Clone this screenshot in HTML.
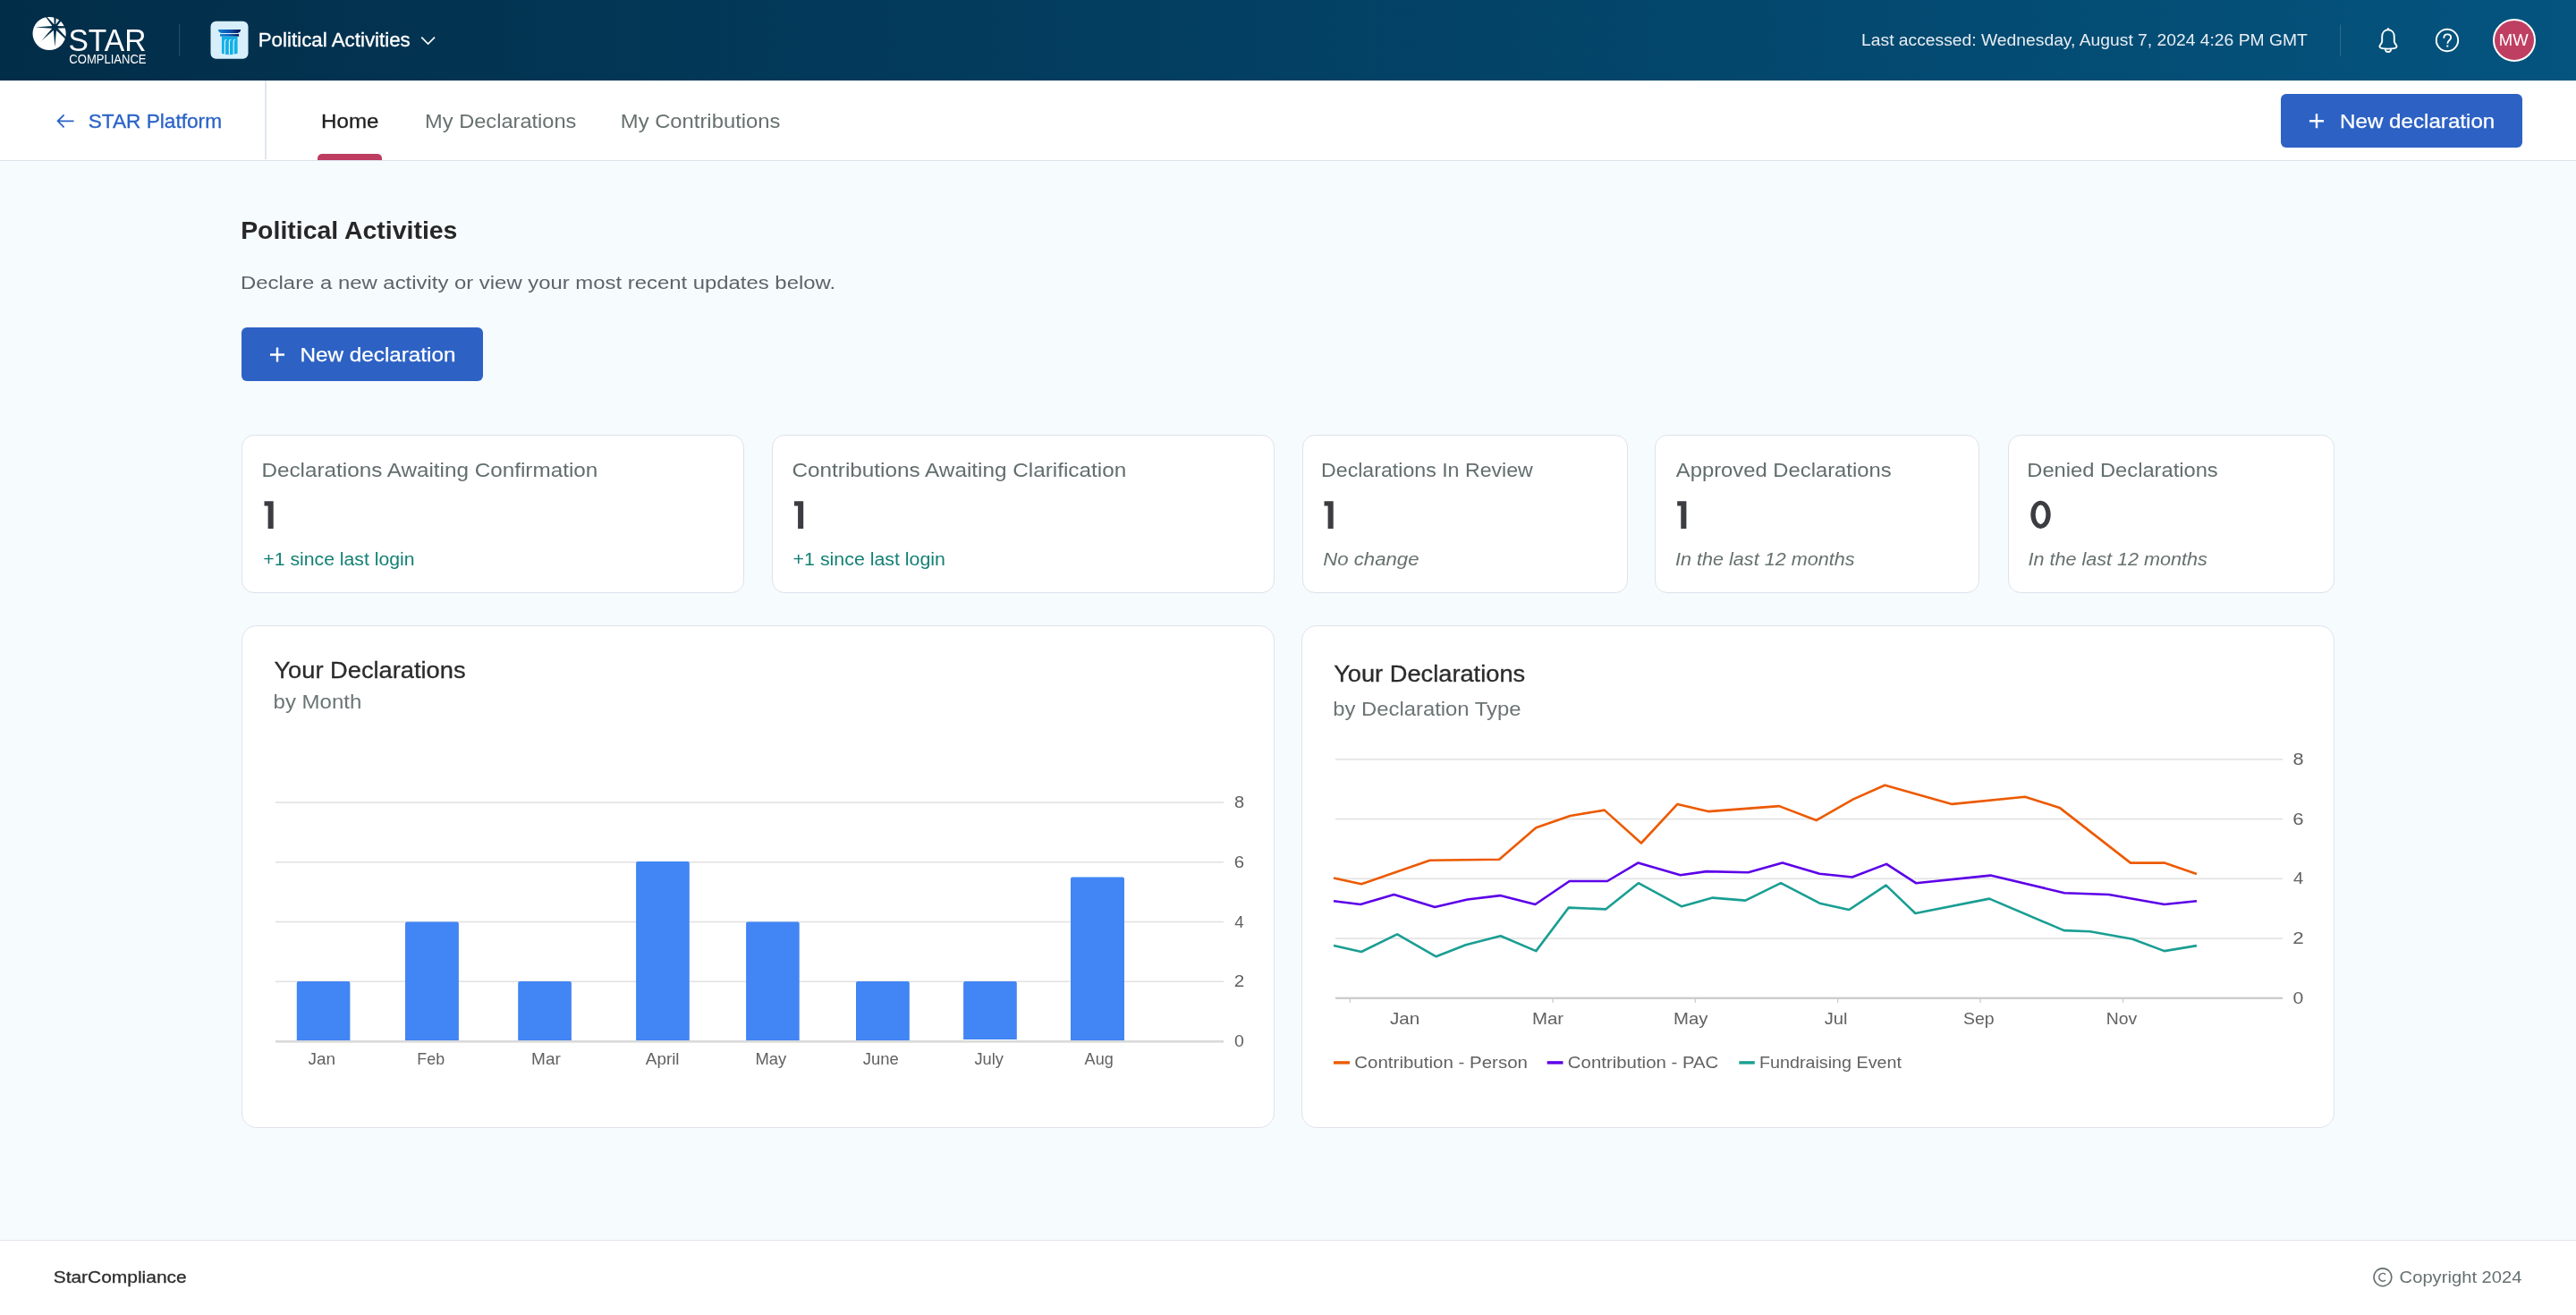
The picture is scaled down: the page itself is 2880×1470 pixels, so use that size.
<!DOCTYPE html>
<html><head><meta charset="utf-8"><title>Political Activities</title>
<style>
html,body{margin:0;padding:0;width:2880px;height:1470px;overflow:hidden;background:#f6fbfe;font-family:"Liberation Sans",sans-serif;}
.abs{position:absolute;box-sizing:border-box;}
#hdr{left:0;top:0;width:2880px;height:90px;background:linear-gradient(90deg,#022d48 0%,#033d5f 42%,#04547f 100%);}
#sub{left:0;top:90px;width:2880px;height:90px;background:#fff;border-bottom:1.5px solid #dde3ec;}
#vdiv{left:296px;top:90px;width:1.5px;height:88px;background:#e1e6ee;}
#uline{left:355.3px;top:172.4px;width:72.2px;height:6.6px;background:#bd3c60;border-radius:5px 5px 0 0;}
.btn{background:#2d62c4;border-radius:6px;}
.card{background:#fff;border:1.8px solid #dfe2ec;border-radius:14px;}
.ccard{background:#fff;border:1.8px solid #dfe2ec;border-radius:17px;}
#foot{left:0;top:1386px;width:2880px;height:84px;background:#fff;border-top:1.5px solid #e2e7ee;}
svg{position:absolute;left:0;top:0;will-change:transform;}
</style></head><body>
<div class="abs" id="hdr"></div>
<div class="abs" id="sub"></div>
<div class="abs" id="vdiv"></div>
<div class="abs" id="uline"></div>
<div class="abs btn" style="left:2550px;top:105px;width:270px;height:60px"></div>
<div class="abs btn" style="left:270px;top:366px;width:270px;height:60px"></div>
<div class="abs card" style="left:270px;top:486px;width:562px;height:176.5px"></div>
<div class="abs card" style="left:863px;top:486px;width:562px;height:176.5px"></div>
<div class="abs card" style="left:1456px;top:486px;width:364px;height:176.5px"></div>
<div class="abs card" style="left:1850px;top:486px;width:363px;height:176.5px"></div>
<div class="abs card" style="left:2245px;top:486px;width:365px;height:176.5px"></div>
<div class="abs ccard" style="left:270px;top:699px;width:1155px;height:562px"></div>
<div class="abs ccard" style="left:1455px;top:699px;width:1155px;height:562px"></div>
<div class="abs" id="foot"></div>
<svg width="2880" height="1470" viewBox="0 0 2880 1470" font-family="Liberation Sans, sans-serif">
<path d="M295.5 560.3 H305.7 V590.9 H299.6 V565.6 H295.5 Z" fill="#3c3d42"/>
<path d="M888.0 560.3 H898.2 V590.9 H892.1 V565.6 H888.0 Z" fill="#3c3d42"/>
<path d="M1480.5 560.3 H1490.7 V590.9 H1484.6 V565.6 H1480.5 Z" fill="#3c3d42"/>
<path d="M1875.2 560.3 H1885.4 V590.9 H1879.3 V565.6 H1875.2 Z" fill="#3c3d42"/>
<path d="M2281.5 559.7 A11.2 15.6 0 1 0 2281.5 590.9 A11.2 15.6 0 1 0 2281.5 559.7 Z M2281.5 564.6 A5.8 10.65 0 1 1 2281.5 585.9 A5.8 10.65 0 1 1 2281.5 564.6 Z" fill="#3c3d42" fill-rule="evenodd"/>
<rect x="200" y="27" width="1.2" height="36" fill="#ffffff" fill-opacity="0.14"/>
<rect x="2616" y="27.5" width="1.2" height="35.5" fill="#ffffff" fill-opacity="0.14"/>
<circle cx="55.1" cy="37.5" r="18.6" fill="#fff"/><polygon points="61.4,28.7 39.3,30.6 39.3,30.6 61.4,32.1" fill="#022e4a"/><polygon points="62.6,29.4 50.9,17.2 50.3,17.8 60.2,31.4" fill="#022e4a"/><polygon points="62.1,30.4 63.0,15.5 60.2,15.5 60.7,30.4" fill="#022e4a"/><polygon points="62.2,31.0 69.6,22.0 67.6,20.4 60.6,29.8" fill="#022e4a"/><polygon points="61.4,31.7 76.0,31.3 76.0,29.3 61.4,29.1" fill="#022e4a"/><polygon points="60.3,31.5 73.9,44.2 75.1,43.0 62.5,29.3" fill="#022e4a"/><polygon points="59.5,30.4 61.4,52.6 61.4,52.6 63.3,30.4" fill="#022e4a"/><polygon points="60.3,29.3 46.5,45.4 46.5,45.4 62.5,31.5" fill="#022e4a"/><circle cx="61.4" cy="30.4" r="3.4" fill="#022e4a"/>
<defs><linearGradient id="cap" x1="0" x2="1" y1="0" y2="0"><stop offset="0" stop-color="#0e82d8"/><stop offset="0.55" stop-color="#0a4fa8"/><stop offset="1" stop-color="#050f50"/></linearGradient>
<linearGradient id="hdr" x1="0" x2="1" y1="0" y2="0"><stop offset="0" stop-color="#022c47"/><stop offset="0.45" stop-color="#033c60"/><stop offset="1" stop-color="#04517f"/></linearGradient></defs>
<rect x="235.5" y="23.8" width="42" height="42" rx="6" fill="#d7effb"/>
<path d="M243.9 33.1 H269.2 Q268.8 36.7 265.5 36.9 H247.6 Q244.3 36.7 243.9 33.1 Z" fill="url(#cap)"/>
<rect x="246" y="38.1" width="21.1" height="2.6" fill="url(#cap)"/>
<path d="M247.9 40.7 H265.6 V59.8 Q256.7 62.6 247.9 59.8 Z" fill="#12b0e8"/>
<path d="M251.4 61 V46.2 Q251.4 44.3 253.2 44.3" stroke="#d7effb" stroke-width="1.2" fill="none"/>
<path d="M256.4 61 V46.2 Q256.4 44.3 258.2 44.3" stroke="#d7effb" stroke-width="1.2" fill="none"/>
<path d="M261.2 61 V46.2 Q261.2 44.3 263.0 44.3" stroke="#d7effb" stroke-width="1.2" fill="none"/>
<polyline points="471.2,41.6 478.6,49 486,41.6" fill="none" stroke="#fff" stroke-width="1.7"/>
<path d="M2670 33.3 C2665.8 33.3 2663.2 36.7 2663.2 41 V46.3 C2663.2 48.6 2660.4 50 2660.4 52 C2660.4 53.6 2664.5 54.6 2670 54.6 C2675.5 54.6 2679.6 53.6 2679.6 52 C2679.6 50 2676.8 48.6 2676.8 46.3 V41 C2676.8 36.7 2674.2 33.3 2670 33.3 Z" fill="none" stroke="#fff" stroke-width="1.9"/>
<rect x="2668.7" y="31.3" width="2.6" height="2.6" rx="1.1" fill="#fff"/>
<path d="M2666.9 54.9 A3.1 3.1 0 0 0 2673.1 54.9" fill="none" stroke="#fff" stroke-width="1.8"/>
<circle cx="2736" cy="45" r="12.2" fill="none" stroke="#fff" stroke-width="1.9"/>
<path d="M2732.3 42.8 C2732.3 39.8 2734 38.4 2736.2 38.4 C2738.6 38.4 2740.2 40 2740.2 42 C2740.2 44.8 2736.3 45.4 2736.3 48.8" fill="none" stroke="#fff" stroke-width="1.9"/>
<rect x="2735.3" y="50.5" width="2" height="2" fill="#fff"/>
<circle cx="2811" cy="45" r="23" fill="#bf3f62" stroke="#fff" stroke-width="2"/>
<path d="M82.6 135.3 H64.8 M71.6 128.3 L64.6 135.3 L71.6 142.3" fill="none" stroke="#2b63c6" stroke-width="1.8"/>
<path d="M2582.0 135.3 h16 M2590.0 127.3 v16" stroke="#fff" stroke-width="2.4"/>
<path d="M302.0 396.5 h16 M310.0 388.5 v16" stroke="#fff" stroke-width="2.4"/>
<rect x="308" y="896.20" width="1060" height="1.6" fill="#e2e2e2"/>
<rect x="308" y="962.95" width="1060" height="1.6" fill="#e2e2e2"/>
<rect x="308" y="1029.70" width="1060" height="1.6" fill="#e2e2e2"/>
<rect x="308" y="1096.45" width="1060" height="1.6" fill="#e2e2e2"/>
<path d="M331.8 1164.0 V1099.0 Q331.8 1097.0 333.8 1097.0 H389.4 Q391.4 1097.0 391.4 1099.0 V1164.0 Z" fill="#4285f4"/>
<path d="M453.0 1164.0 V1032.5 Q453.0 1030.5 455.0 1030.5 H510.9 Q512.9 1030.5 512.9 1032.5 V1164.0 Z" fill="#4285f4"/>
<path d="M579.2 1164.0 V1099.0 Q579.2 1097.0 581.2 1097.0 H636.9 Q638.9 1097.0 638.9 1099.0 V1164.0 Z" fill="#4285f4"/>
<path d="M711.1 1164.0 V965.0 Q711.1 963.0 713.1 963.0 H768.8 Q770.8 963.0 770.8 965.0 V1164.0 Z" fill="#4285f4"/>
<path d="M834.1 1164.0 V1032.5 Q834.1 1030.5 836.1 1030.5 H891.7 Q893.7 1030.5 893.7 1032.5 V1164.0 Z" fill="#4285f4"/>
<path d="M957.0 1164.0 V1099.0 Q957.0 1097.0 959.0 1097.0 H1014.8 Q1016.8 1097.0 1016.8 1099.0 V1164.0 Z" fill="#4285f4"/>
<path d="M1077.1 1162.0 V1099.0 Q1077.1 1097.0 1079.1 1097.0 H1134.8 Q1136.8 1097.0 1136.8 1099.0 V1162.0 Z" fill="#4285f4"/>
<path d="M1197.0 1164.0 V982.4 Q1197.0 980.4 1199.0 980.4 H1255.0 Q1257.0 980.4 1257.0 982.4 V1164.0 Z" fill="#4285f4"/>
<rect x="308" y="1163" width="1060" height="2.6" fill="#d9d9d9"/>
<rect x="1493" y="848.00" width="1059" height="1.6" fill="#e2e2e2"/>
<rect x="1493" y="914.75" width="1059" height="1.6" fill="#e2e2e2"/>
<rect x="1493" y="981.50" width="1059" height="1.6" fill="#e2e2e2"/>
<rect x="1493" y="1048.25" width="1059" height="1.6" fill="#e2e2e2"/>
<rect x="1493" y="1114.6" width="1059" height="2.4" fill="#cccccc"/>
<rect x="1508.7" y="1116" width="1.3" height="5" fill="#cccccc"/>
<rect x="1735.4" y="1116" width="1.3" height="5" fill="#cccccc"/>
<rect x="1894.6" y="1116" width="1.3" height="5" fill="#cccccc"/>
<rect x="2054.0" y="1116" width="1.3" height="5" fill="#cccccc"/>
<rect x="2213.4" y="1116" width="1.3" height="5" fill="#cccccc"/>
<rect x="2372.9" y="1116" width="1.3" height="5" fill="#cccccc"/>
<polyline points="1491.0,981.4 1522.0,988.3 1598.6,961.7 1676.2,960.7 1717.3,925.2 1755.5,912.0 1793.8,905.6 1834.9,942.5 1875.4,898.9 1909.7,907.1 1989.1,901.1 2030.7,917.0 2072.1,893.4 2107.3,877.7 2182.5,898.9 2264.0,890.7 2302.6,902.9 2382.0,964.6 2419.8,964.6 2455.9,977.0" fill="none" stroke="#ec5a00" stroke-width="2.6" stroke-linejoin="round"/>
<polyline points="1491.0,1007.3 1521.0,1011.0 1558.5,1000.0 1604.1,1013.9 1640.6,1005.5 1677.1,1001.1 1716.4,1011.0 1754.7,985.0 1797.0,985.0 1831.3,964.6 1878.7,978.3 1907.9,974.1 1954.5,975.3 1992.8,964.6 2034.3,976.8 2070.8,980.5 2109.1,965.9 2142.0,987.2 2225.4,978.6 2308.1,998.2 2357.7,1000.0 2419.8,1011.0 2455.9,1007.3" fill="none" stroke="#5c00e8" stroke-width="2.6" stroke-linejoin="round"/>
<polyline points="1491.0,1057.1 1522.0,1064.0 1562.1,1044.3 1605.6,1069.3 1638.8,1056.2 1677.7,1046.2 1717.3,1063.1 1753.8,1014.6 1795.1,1016.4 1831.8,987.2 1880.2,1013.3 1914.8,1003.6 1951.4,1006.6 1991.0,987.2 2034.3,1009.7 2067.2,1017.0 2108.6,989.6 2141.4,1021.0 2224.1,1004.6 2307.5,1040.1 2336.7,1041.2 2384.2,1049.8 2419.8,1063.1 2455.9,1057.1" fill="none" stroke="#1a9e93" stroke-width="2.6" stroke-linejoin="round"/>
<rect x="1491.0" y="1186.2" width="18.0" height="3.4" fill="#ec5a00"/>
<rect x="1729.7" y="1186.2" width="17.8" height="3.4" fill="#5c00e8"/>
<rect x="1944.3" y="1186.2" width="17.5" height="3.4" fill="#1a9e93"/>
<circle cx="2663.9" cy="1427.8" r="9.9" fill="none" stroke="#667070" stroke-width="1.6"/>
<path d="M2667 1424.6 A4.3 4.3 0 1 0 2667 1431" fill="none" stroke="#667070" stroke-width="1.6"/>
<text x="76.49" y="56.50" font-size="34.16" fill="#ffffff" textLength="86.92" lengthAdjust="spacingAndGlyphs">STAR</text>
<text x="77.35" y="71.20" font-size="14.24" fill="#ffffff" textLength="86.20" lengthAdjust="spacingAndGlyphs">COMPLIANCE</text>
<text x="288.73" y="52.40" font-size="21.37" fill="#ffffff" stroke="#ffffff" stroke-width="0.30" textLength="170.05" lengthAdjust="spacingAndGlyphs">Political Activities</text>
<text x="2081.06" y="50.80" font-size="18.02" fill="#e9eef3" textLength="498.74" lengthAdjust="spacingAndGlyphs">Last accessed: Wednesday, August 7, 2024 4:26 PM GMT</text>
<text x="2793.82" y="51.00" font-size="18.02" fill="#ffffff" textLength="32.86" lengthAdjust="spacingAndGlyphs">MW</text>
<text x="98.68" y="142.70" font-size="21.51" fill="#2b63c6" stroke="#2b63c6" stroke-width="0.30" textLength="149.35" lengthAdjust="spacingAndGlyphs">STAR Platform</text>
<text x="359.07" y="142.70" font-size="21.51" fill="#1f1f1f" stroke="#1f1f1f" stroke-width="0.30" textLength="64.32" lengthAdjust="spacingAndGlyphs">Home</text>
<text x="475.11" y="142.50" font-size="21.51" fill="#66716f" textLength="169.32" lengthAdjust="spacingAndGlyphs">My Declarations</text>
<text x="693.80" y="142.50" font-size="21.51" fill="#66716f" textLength="178.64" lengthAdjust="spacingAndGlyphs">My Contributions</text>
<text x="2616.07" y="142.80" font-size="21.51" fill="#ffffff" stroke="#ffffff" stroke-width="0.25" textLength="173.21" lengthAdjust="spacingAndGlyphs">New declaration</text>
<text x="269.16" y="267.00" font-size="28.34" fill="#272727" font-weight="bold" textLength="242.26" lengthAdjust="spacingAndGlyphs">Political Activities</text>
<text x="269.09" y="322.60" font-size="20.79" fill="#5d636b" textLength="665.01" lengthAdjust="spacingAndGlyphs">Declare a new activity or view your most recent updates below.</text>
<text x="335.46" y="403.60" font-size="21.51" fill="#ffffff" stroke="#ffffff" stroke-width="0.25" textLength="174.03" lengthAdjust="spacingAndGlyphs">New declaration</text>
<text x="292.47" y="532.70" font-size="21.22" fill="#626d6d" textLength="375.81" lengthAdjust="spacingAndGlyphs">Declarations Awaiting Confirmation</text>
<text x="885.49" y="532.70" font-size="21.22" fill="#626d6d" textLength="373.69" lengthAdjust="spacingAndGlyphs">Contributions Awaiting Clarification</text>
<text x="1477.05" y="532.70" font-size="21.22" fill="#626d6d" textLength="236.79" lengthAdjust="spacingAndGlyphs">Declarations In Review</text>
<text x="1873.80" y="532.70" font-size="21.22" fill="#626d6d" textLength="240.83" lengthAdjust="spacingAndGlyphs">Approved Declarations</text>
<text x="2266.30" y="532.70" font-size="21.22" fill="#626d6d" textLength="213.43" lengthAdjust="spacingAndGlyphs">Denied Declarations</text>
<text x="294.35" y="631.70" font-size="20.79" fill="#138074" textLength="169.25" lengthAdjust="spacingAndGlyphs">+1 since last login</text>
<text x="886.64" y="631.70" font-size="20.79" fill="#138074" textLength="170.37" lengthAdjust="spacingAndGlyphs">+1 since last login</text>
<text x="1479.23" y="631.70" font-size="20.79" fill="#66716f" font-style="italic" textLength="107.27" lengthAdjust="spacingAndGlyphs">No change</text>
<text x="1873.04" y="631.70" font-size="20.79" fill="#66716f" font-style="italic" textLength="200.49" lengthAdjust="spacingAndGlyphs">In the last 12 months</text>
<text x="2267.44" y="631.70" font-size="20.79" fill="#66716f" font-style="italic" textLength="200.49" lengthAdjust="spacingAndGlyphs">In the last 12 months</text>
<text x="306.45" y="758.30" font-size="25.58" fill="#2b2b2b" stroke="#2b2b2b" stroke-width="0.30" textLength="214.10" lengthAdjust="spacingAndGlyphs">Your Declarations</text>
<text x="305.56" y="792.40" font-size="22.38" fill="#6b7575" textLength="98.81" lengthAdjust="spacingAndGlyphs">by Month</text>
<text x="1491.16" y="761.90" font-size="24.86" fill="#2b2b2b" stroke="#2b2b2b" stroke-width="0.30" textLength="214.00" lengthAdjust="spacingAndGlyphs">Your Declarations</text>
<text x="1490.27" y="800.00" font-size="22.38" fill="#6b7575" textLength="210.21" lengthAdjust="spacingAndGlyphs">by Declaration Type</text>
<text x="344.62" y="1190.00" font-size="17.73" fill="#616161" textLength="30.54" lengthAdjust="spacingAndGlyphs">Jan</text>
<text x="466.37" y="1190.00" font-size="17.73" fill="#616161" textLength="30.76" lengthAdjust="spacingAndGlyphs">Feb</text>
<text x="594.08" y="1190.00" font-size="17.73" fill="#616161" textLength="32.77" lengthAdjust="spacingAndGlyphs">Mar</text>
<text x="721.80" y="1190.00" font-size="17.73" fill="#616161" textLength="37.77" lengthAdjust="spacingAndGlyphs">April</text>
<text x="844.53" y="1190.00" font-size="17.73" fill="#616161" textLength="34.77" lengthAdjust="spacingAndGlyphs">May</text>
<text x="964.82" y="1190.00" font-size="17.73" fill="#616161" textLength="40.04" lengthAdjust="spacingAndGlyphs">June</text>
<text x="1089.43" y="1190.00" font-size="17.73" fill="#616161" textLength="32.57" lengthAdjust="spacingAndGlyphs">July</text>
<text x="1212.60" y="1190.00" font-size="17.73" fill="#616161" textLength="32.10" lengthAdjust="spacingAndGlyphs">Aug</text>
<text x="1379.90" y="903.00" font-size="17.44" fill="#616161" textLength="11.12" lengthAdjust="spacingAndGlyphs">8</text>
<text x="1379.68" y="969.75" font-size="17.44" fill="#616161" textLength="11.36" lengthAdjust="spacingAndGlyphs">6</text>
<text x="1380.33" y="1036.50" font-size="17.44" fill="#616161" textLength="10.36" lengthAdjust="spacingAndGlyphs">4</text>
<text x="1379.67" y="1103.25" font-size="17.44" fill="#616161" textLength="11.49" lengthAdjust="spacingAndGlyphs">2</text>
<text x="1380.01" y="1170.00" font-size="17.44" fill="#616161" textLength="10.89" lengthAdjust="spacingAndGlyphs">0</text>
<text x="1553.99" y="1145.40" font-size="18.17" fill="#616161" textLength="33.27" lengthAdjust="spacingAndGlyphs">Jan</text>
<text x="1712.96" y="1145.40" font-size="18.17" fill="#616161" textLength="35.20" lengthAdjust="spacingAndGlyphs">Mar</text>
<text x="1870.97" y="1145.40" font-size="18.17" fill="#616161" textLength="38.43" lengthAdjust="spacingAndGlyphs">May</text>
<text x="2039.70" y="1145.40" font-size="18.17" fill="#616161" textLength="25.86" lengthAdjust="spacingAndGlyphs">Jul</text>
<text x="2195.03" y="1145.40" font-size="18.17" fill="#616161" textLength="34.57" lengthAdjust="spacingAndGlyphs">Sep</text>
<text x="2354.85" y="1145.40" font-size="18.17" fill="#616161" textLength="34.45" lengthAdjust="spacingAndGlyphs">Nov</text>
<text x="2563.43" y="854.80" font-size="17.44" fill="#616161" textLength="12.06" lengthAdjust="spacingAndGlyphs">8</text>
<text x="2563.19" y="921.55" font-size="17.44" fill="#616161" textLength="12.32" lengthAdjust="spacingAndGlyphs">6</text>
<text x="2563.90" y="988.30" font-size="17.44" fill="#616161" textLength="11.23" lengthAdjust="spacingAndGlyphs">4</text>
<text x="2563.18" y="1055.05" font-size="17.44" fill="#616161" textLength="12.45" lengthAdjust="spacingAndGlyphs">2</text>
<text x="2563.56" y="1121.80" font-size="17.44" fill="#616161" textLength="11.81" lengthAdjust="spacingAndGlyphs">0</text>
<text x="1514.28" y="1194.30" font-size="18.90" fill="#616161" textLength="193.68" lengthAdjust="spacingAndGlyphs">Contribution - Person</text>
<text x="1752.88" y="1194.30" font-size="18.90" fill="#616161" textLength="168.48" lengthAdjust="spacingAndGlyphs">Contribution - PAC</text>
<text x="1966.92" y="1194.30" font-size="18.90" fill="#616161" textLength="159.03" lengthAdjust="spacingAndGlyphs">Fundraising Event</text>
<text x="59.66" y="1434.00" font-size="18.60" fill="#2d2d2d" stroke="#2d2d2d" stroke-width="0.30" textLength="149.00" lengthAdjust="spacingAndGlyphs">StarCompliance</text>
<text x="2682.59" y="1434.00" font-size="19.04" fill="#667070" textLength="136.94" lengthAdjust="spacingAndGlyphs">Copyright 2024</text>
</svg>
</body></html>
